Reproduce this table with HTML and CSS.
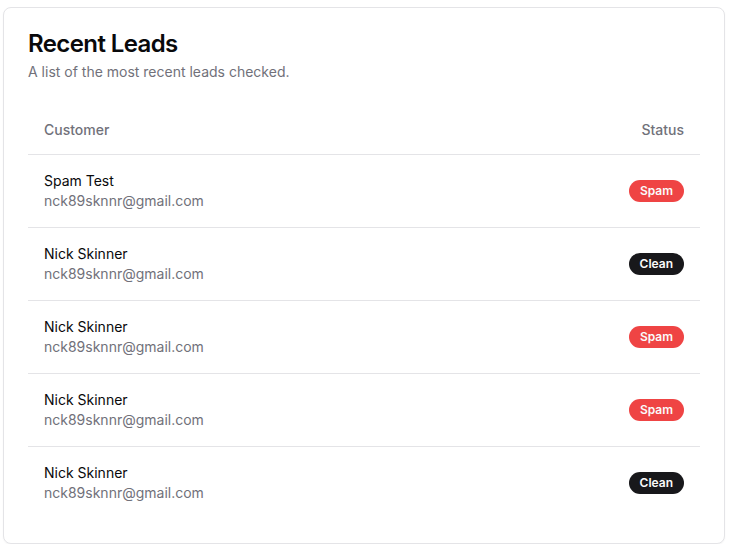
FILE: index.html
```html
<!DOCTYPE html>
<html>
<head>
<meta charset="utf-8">
<link rel="stylesheet" href="styles.css">
</head>
<body>
<div class="page">
  <div class="card">
    <div class="card-header">
      <h1 class="card-title">Recent Leads</h1>
      <p class="card-desc">A list of the most recent leads checked.</p>
    </div>
    <div class="card-content">
      <table class="table">
        <thead>
          <tr><th class="th">Customer</th><th class="th th-right">Status</th></tr>
        </thead>
        <tbody>
          <tr>
            <td class="td"><div class="name">Spam Test</div><div class="email">nck89sknnr@gmail.com</div></td>
            <td class="td td-right"><span class="badge badge-spam">Spam</span></td>
          </tr>
          <tr>
            <td class="td"><div class="name">Nick Skinner</div><div class="email">nck89sknnr@gmail.com</div></td>
            <td class="td td-right"><span class="badge badge-clean">Clean</span></td>
          </tr>
          <tr>
            <td class="td"><div class="name">Nick Skinner</div><div class="email">nck89sknnr@gmail.com</div></td>
            <td class="td td-right"><span class="badge badge-spam">Spam</span></td>
          </tr>
          <tr>
            <td class="td"><div class="name">Nick Skinner</div><div class="email">nck89sknnr@gmail.com</div></td>
            <td class="td td-right"><span class="badge badge-spam">Spam</span></td>
          </tr>
          <tr>
            <td class="td"><div class="name">Nick Skinner</div><div class="email">nck89sknnr@gmail.com</div></td>
            <td class="td td-right"><span class="badge badge-clean">Clean</span></td>
          </tr>
        </tbody>
      </table>
    </div>
  </div>
</div>
</body>
</html>
```
FILE: styles.css
```css
* { box-sizing: border-box; }
html, body { margin: 0; padding: 0; background: #fff; }
body {
  font-family: Inter, "Liberation Sans", sans-serif;
  color: #09090b;
}
.page {
  padding: 7px 10px 0 3px;
}
.card {
  border: 1px solid #e4e4e7;
  border-radius: 8px;
  background: #fff;
  box-shadow: 0 1px 2px rgba(0,0,0,0.04);
}
.card-header {
  padding: 24px;
  display: flex;
  flex-direction: column;
  gap: 6px;
}
.card-title {
  margin: 0;
  font-size: 24px;
  line-height: 24px;
  font-weight: 600;
  letter-spacing: -0.6px;
}
.card-desc {
  margin: 0;
  font-size: 14px;
  line-height: 20px;
  color: #71717a;
}
.card-content {
  padding: 0 24px 24px;
}
.table {
  width: 100%;
  border-collapse: collapse;
  font-size: 14px;
}
.th {
  height: 48px;
  padding: 0 16px;
  text-align: left;
  font-weight: 500;
  color: #71717a;
  border-bottom: 1px solid #e4e4e7;
  vertical-align: middle;
}
.th-right, .td-right { text-align: right; }
tbody tr { border-bottom: 1px solid #e4e4e7; }
tbody tr:last-child { border-bottom: 0; }
.td {
  padding: 16px;
  vertical-align: middle;
}
.name { line-height: 20px; font-weight: 400; color: #09090b; }
.email { line-height: 20px; color: #71717a; }
.badge {
  display: inline-block;
  border: 1px solid transparent;
  border-radius: 9999px;
  padding: 2px 10px;
  font-size: 12px;
  line-height: 16px;
  font-weight: 600;
  color: #fafafa;
}
.badge-spam { background: #ef4444; }
.badge-clean { background: #18181b; }
```
